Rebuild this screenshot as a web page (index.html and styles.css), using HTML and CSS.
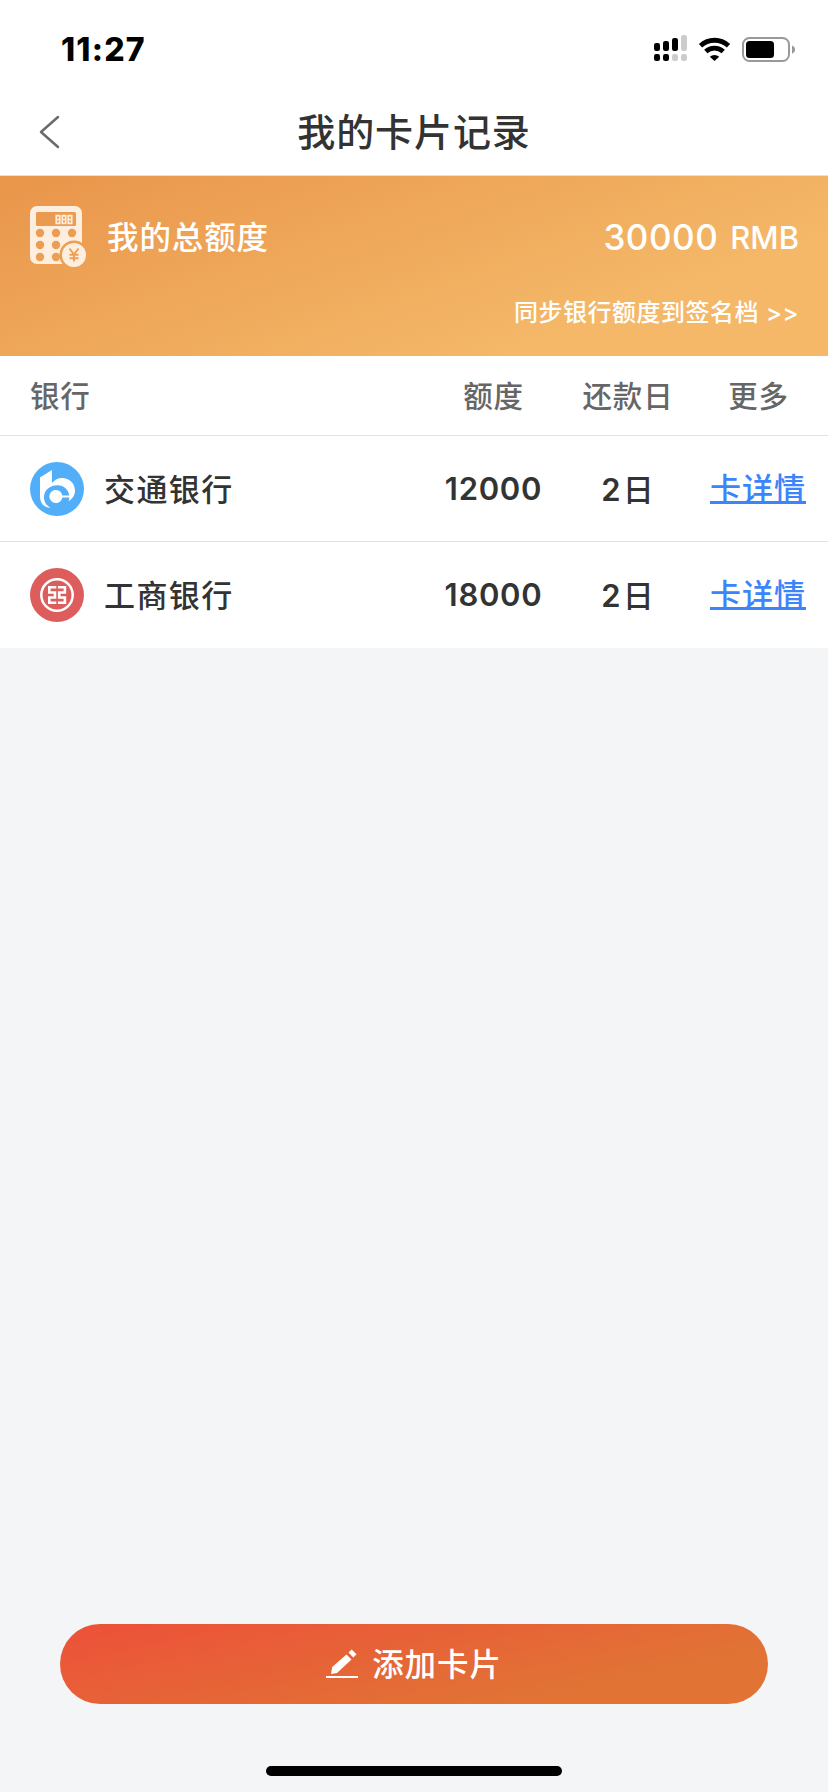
FILE: index.html
```html
<!DOCTYPE html>
<html lang="zh-CN">
<head>
<meta charset="utf-8">
<title>我的卡片记录</title>
<link rel="stylesheet" href="styles.css">
</head>
<body>
<div class="screen">
  <header class="status">
    <span class="time">11:27</span>
    <svg class="status-icons" width="144" height="32" viewBox="0 0 144 32">
      <g fill="#000">
        <rect x="1" y="9" width="6" height="8" rx="2.2"/>
        <rect x="10" y="7" width="6" height="10" rx="2.2"/>
        <rect x="19" y="4" width="6" height="13" rx="2.2"/>
        <rect x="1" y="20" width="6" height="7" rx="2.2"/>
        <rect x="10" y="20" width="6" height="7" rx="2.2"/>
      </g>
      <g fill="#ccc">
        <rect x="28" y="1" width="6" height="16" rx="2.2"/>
        <rect x="19" y="20" width="6" height="7" rx="2.2"/>
        <rect x="28" y="20" width="6" height="7" rx="2.2"/>
      </g>
      <g fill="none" stroke="#000" stroke-width="4.8">
        <path d="M47.5 11.8a20.5 20.5 0 0 1 28 0"/>
        <path d="M52.8 17.6a12.8 12.8 0 0 1 17.4 0"/>
      </g>
      <path d="M61.5 27l-4.7-4.2a7 7 0 0 1 9.4 0z"/>
      <rect x="90" y="4" width="46" height="23" rx="6.5" fill="none" stroke="#999" stroke-width="2"/>
      <rect x="93" y="7" width="28" height="17" rx="3.5"/>
      <path d="M139 11.5c4 1.2 4 7 0 8.2z" fill="#999"/>
    </svg>
  </header>
  <nav class="nav">
    <svg class="back" width="22" height="34" viewBox="0 0 22 34"><path d="M19 2L2 17l17 15" fill="none" stroke="#6b6b6b" stroke-width="2.5" stroke-linecap="round" stroke-linejoin="round"/></svg>
    <h1 class="title">我的卡片记录</h1>
  </nav>
  <section class="banner">
    <div class="total">
      <svg class="calc" width="57" height="62" viewBox="0 0 57 62">
        <defs>
          <mask id="calc-cut">
            <rect width="57" height="62" fill="#fff"/>
            <rect x="6" y="6" width="40" height="14" rx="1.5" fill="#000"/>
            <g fill="#000">
              <circle cx="10" cy="27" r="4.2"/><circle cx="26" cy="27" r="4.2"/><circle cx="42" cy="27" r="4.2"/>
              <circle cx="10" cy="39" r="4.2"/><circle cx="26" cy="39" r="4.2"/>
              <circle cx="10" cy="51" r="4.2"/><circle cx="26" cy="51" r="4.2"/>
              <circle cx="44" cy="49" r="14.6"/>
            </g>
          </mask>
        </defs>
        <rect width="52" height="58" rx="7" fill="#fdeee0" mask="url(#calc-cut)"/>
        <path d="M26.3 9.6h3.4v7.8h-3.4zM26.3 13.5h3.4M32.3 9.6h3.4v7.8h-3.4zM32.3 13.5h3.4M38.3 9.6h3.4v7.8h-3.4zM38.3 13.5h3.4" fill="none" stroke="#fdeee0" stroke-width="1.7"/>
        <circle cx="44" cy="49" r="12" fill="#fdeee0"/>
        <path d="M39.5 42.5l4.5 6 4.5-6M44 48.500v7M39.5 48.800h9M39.5 52.200h9" fill="none" stroke="#ee9f54" stroke-width="1.9"/>
      </svg>
      <span class="total-label">我的总额度</span>
      <span class="amount">30000</span>
      <span class="unit">RMB</span>
    </div>
    <div class="sync">同步银行额度到签名档 <span class="arrows">&gt;&gt;</span></div>
  </section>
  <section class="table">
    <div class="row head">
      <span class="first">银行</span><span>额度</span><span>还款日</span><span>更多</span>
    </div>
    <div class="row">
      <span class="first bank">
        <svg width="54" height="54" viewBox="0 0 54 54">
          <circle cx="27" cy="27" r="27" fill="#52aef9"/>
          <path d="M10 15.5L22 8v13C25 17.5 29 15.5 33 16c7 .7 12 6 12 12.5 0 4.5-2.5 8.5-6.5 10.700l1-3.700h-7.200a6.5 6.5 0 1 1 0-2h7C38.5 27.5 34 23.2 27.5 23.2 20 23.2 14 28 14 35.2c0 4.8 2.5 8.3 6.5 10.500C13.5 45.500 10 41 10 34z" fill="#fff"/>
        </svg>
        <span class="name">交通银行</span>
      </span>
      <span class="num">12000</span><span class="day"><b>2</b>日</span><span class="more"><a class="link">卡详情</a></span>
    </div>
    <div class="row">
      <span class="first bank">
        <svg width="54" height="54" viewBox="0 0 54 54">
          <circle cx="27" cy="27" r="27" fill="#dc5d5b"/>
          <circle cx="27" cy="27" r="15.7" fill="none" stroke="#fff" stroke-width="2.5"/>
          <path d="M26.3 19.300h-7v5.200H25v5h-5.700v5.200h7M27.9 19.300h7v5.200h-5.700v5h5.700v5.200h-7" fill="none" stroke="#fff" stroke-width="2.6"/>
        </svg>
        <span class="name">工商银行</span>
      </span>
      <span class="num">18000</span><span class="day"><b>2</b>日</span><span class="more"><a class="link">卡详情</a></span>
    </div>
  </section>
  <footer class="footer">
    <button class="add">
      <svg width="32" height="32" viewBox="0 0 32 32" fill="#fff">
        <path d="M5 26l1.200-7L20.500 6.500l5 5L11 25zM22.500 4.600l3.200-3.100 4.800 4.800-3.200 3.100z"/>
        <rect y="28" width="32" height="2"/>
      </svg>
      <span class="add-label">添加卡片</span>
    </button>
    <div class="home"></div>
  </footer>
</div>
</body>
</html>
```
FILE: styles.css
```css
* { box-sizing: border-box; }
body {
  margin: 0;
  background: #f3f5f7;
  font-family: Inter, "Noto Sans CJK SC", sans-serif;
  font-weight: 500;
  color: #333;
}
.screen {
  width: 828px;
  height: 1792px;
  display: flex;
  flex-direction: column;
  overflow: hidden;
}
.status {
  height: 88px;
  padding: 34px 31px 0 61px;
  display: flex;
  justify-content: space-between;
  align-items: flex-start;
  background: #fff;
}
.time {
  font-size: 32px;
  line-height: 32px;
  font-weight: 800;
  letter-spacing: 1.2px;
  color: #000;
}
.nav {
  height: 88px;
  display: grid;
  grid-template-columns: 100px 1fr 100px;
  align-items: center;
  background: #fff;
  border-bottom: 1px solid #e2e2e2;
}
.back { margin-left: 39px; }
.title {
  margin: 0;
  text-align: center;
  font-size: 38px;
  line-height: 60px;
  font-weight: 500;
  letter-spacing: 0.9px;
}
.banner {
  height: 180px;
  padding: 30px 29px 0 30px;
  background: linear-gradient(160deg, #e9954a 0%, #f4b868 75%);
  color: #fff;
}
.total {
  height: 62px;
  display: flex;
  align-items: center;
}
.total-label {
  flex: 1;
  margin-left: 20px;
  padding-bottom: 4px;
  font-size: 31.5px;
  letter-spacing: 0.9px;
}
.amount {
  font-size: 35px;
  letter-spacing: 0.5px;
}
.unit {
  margin-left: 12px;
  font-size: 31px;
}
.sync {
  margin-top: 27px;
  font-size: 24px;
  line-height: 36px;
  text-align: right;
  letter-spacing: 0.5px;
}
.table { background: #fff; }
.row {
  height: 106px;
  display: grid;
  grid-template-columns: 424px 139px 130px 131px;
  align-items: center;
  text-align: center;
  font-size: 31px;
  letter-spacing: 1.2px;
  border-bottom: 1px solid #e2e2e2;
}
.row:last-child { border-bottom-color: #fff; }
.row.head {
  height: 80px;
  padding-bottom: 3px;
  font-size: 29.5px;
  letter-spacing: 0.8px;
  color: #666;
}
.first { padding-left: 30px; text-align: left; }
.bank { display: flex; align-items: center; gap: 20px; }
.name { padding-bottom: 3px; letter-spacing: 1.4px; }
.num { font-weight: 600; letter-spacing: 0.7px; }
.day { padding-bottom: 3px; }
.day b { font-weight: 600; margin-right: 1px; }
.more { padding: 8px 1px 0 0; }
.link {
  display: inline-block;
  height: 30px;
  line-height: 30px;
  color: #3c84fa;
  letter-spacing: 1px;
  border-bottom: 3px solid #3c84fa;
  vertical-align: top;
}
.footer {
  margin-top: auto;
  height: 168px;
  padding: 0 60px;
}
.add {
  width: 100%;
  height: 80px;
  display: flex;
  justify-content: center;
  align-items: center;
  gap: 14px;
  border: 0;
  border-radius: 40px;
  background: linear-gradient(168deg, #ed5039 0%, #e17335 75%);
  color: #fff;
  font: inherit;
  font-size: 31.5px;
  letter-spacing: 0.9px;
}
.add-label { padding-bottom: 4px; }
.home {
  width: 296px;
  height: 10px;
  margin: 62px auto 0;
  border-radius: 5px;
  background: #000;
}
```
